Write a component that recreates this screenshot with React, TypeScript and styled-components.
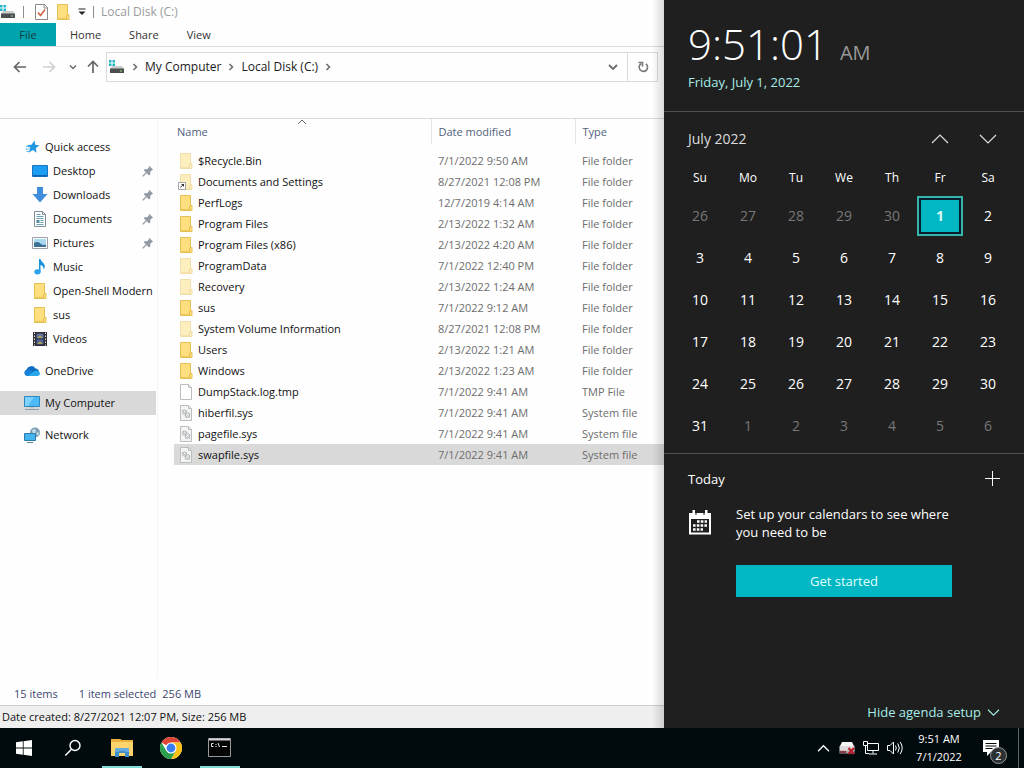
import React, { useState } from "react";
import styled, { createGlobalStyle, css } from "styled-components";

const teal = "#00b7c3";
const mint = "#a6ece6";

const GlobalStyle = createGlobalStyle`
  *, *::before, *::after { box-sizing: border-box; }
  body {
    margin: 0;
    font-family: "Open Sans", "Noto Sans", sans-serif;
    font-size: 12px;
    line-height: 16px;
    color: #1a1a1a;
    background: #fff;
  }
  button { font: inherit; color: inherit; border: 0; padding: 0; margin: 0; background: none; cursor: default; }
  a { color: inherit; text-decoration: none; cursor: default; }
  svg { display: block; flex: none; }
`;

const Desktop = styled.div`
  display: flex;
  flex-direction: column;
  min-height: 100vh;
`;

const Workspace = styled.div`
  flex: 1;
  display: flex;
  min-height: 0;
`;

/* ---------- explorer ---------- */

const Explorer = styled.main`
  position: relative;
  flex: 1;
  min-width: 0;
  display: flex;
  flex-direction: column;
  background: #fefefe;
  overflow: hidden;
  &::after {
    content: "";
    position: absolute;
    inset: 0 0 0 auto;
    width: 12px;
    background: linear-gradient(to right, rgba(0, 0, 0, 0), rgba(0, 0, 0, 0.14));
    pointer-events: none;
  }
`;

const TitleBar = styled.header`
  display: flex;
  align-items: center;
  height: 23px;
  gap: 7px;
`;

const Divider = styled.span`
  width: 1px;
  height: 12px;
  background: #8d8d8d;
`;

const QuickTools = styled.div`
  display: flex;
  align-items: center;
  gap: 7px;
  padding-left: 4px;
`;

const WindowTitle = styled.h1`
  margin: 0;
  font-size: 12px;
  font-weight: 400;
  line-height: 16px;
  color: #9b9b9b;
`;

const RibbonTabs = styled.nav`
  display: flex;
  height: 24px;
  border-bottom: 1px solid #dcdcdc;
  font-size: 11px;
`;

const RibbonTab = styled.button<{ $primary?: boolean }>`
  padding: 0 14px;
  color: #333;
  ${(p) =>
    p.$primary &&
    css`
      width: 56px;
      background: #00a4ae;
      color: #123c40;
    `}
`;

const AddressRow = styled.div`
  display: flex;
  align-items: center;
  height: 40px;
  padding-right: 6px;
`;

const NavButton = styled.button<{ $narrow?: boolean }>`
  display: flex;
  align-items: center;
  justify-content: center;
  width: ${(p) => (p.$narrow ? 20 : 29)}px;
  height: 24px;
`;

const NavButtons = styled.div`
  display: flex;
  padding-left: 5px;
  width: 106px;
`;

const AddressBox = styled.div`
  flex: 1;
  display: flex;
  align-items: center;
  height: 30px;
  border: 1px solid #dadada;
  padding-left: 2px;
`;

const Crumbs = styled.ol`
  flex: 1;
  display: flex;
  align-items: center;
  list-style: none;
  margin: 0;
  padding: 0;
`;

const Crumb = styled.li`
  display: flex;
  align-items: center;
`;

const CrumbArrow = styled.span`
  display: flex;
  justify-content: center;
  width: 20px;
`;

const RefreshButton = styled(NavButton)`
  height: 28px;
  width: 30px;
  border-left: 1px solid #dadada;
`;

const Panes = styled.div`
  flex: 1;
  display: flex;
  margin-top: 31px;
  border-top: 1px solid #dadada;
`;

const TreePane = styled.nav`
  flex: none;
  width: 158px;
  padding: 16px 1px 0 0;
  border-right: 1px solid #f6f6f6;
  font-size: 11px;
`;

const TreeGroup = styled.ul`
  list-style: none;
  margin: 0 0 8px;
  padding: 0;
`;

const TreeLink = styled.a<{ $child?: boolean; $current?: boolean }>`
  display: flex;
  align-items: center;
  gap: 5px;
  height: 24px;
  padding-left: ${(p) => (p.$child ? 32 : 24)}px;
  padding-right: 2px;
  white-space: nowrap;
  color: #111;
  background: ${(p) => (p.$current ? "#d9d9d9" : "transparent")};
`;

const TreeText = styled.span`
  flex: 1;
`;

const ListPane = styled.section`
  flex: 1;
  min-width: 0;
  padding-left: 16px;
`;

const FileTable = styled.table`
  width: 100%;
  table-layout: fixed;
  border-collapse: collapse;
  font-size: 11px;
  tbody::before {
    content: "";
    display: block;
    height: 6px;
  }
`;

const HeadCell = styled.th<{ $width?: number }>`
  position: relative;
  width: ${(p) => (p.$width ? p.$width + "px" : "auto")};
  height: 25px;
  padding: 0 0 0 7px;
  text-align: left;
  font-weight: 400;
  color: #51627c;
  border-left: 1px solid #e6e6e6;
  &:first-child {
    padding-left: 3px;
    border-left: 0;
  }
`;

const SortMark = styled.span`
  position: absolute;
  top: -2px;
  left: 50%;
  margin-left: -5px;
`;

const FileRow = styled.tr<{ $selected?: boolean }>`
  height: 21px;
  background: ${(p) => (p.$selected ? "#d9d9d9" : "transparent")};
`;

const FileCell = styled.td`
  padding: 0 0 0 7px;
  white-space: nowrap;
  color: #6d6d6d;
  &:first-child {
    padding-left: 4px;
  }
`;

const FileName = styled.span`
  display: flex;
  align-items: center;
  gap: 4px;
  color: #111;
`;

const StatusBar = styled.footer`
  display: flex;
  align-items: center;
  gap: 21px;
  height: 26px;
  padding: 3px 0 0 14px;
  font-size: 11px;
  color: #3c4870;
`;

const StatusGroup = styled.span`
  display: flex;
  gap: 6px;
`;

const DetailsBar = styled.div`
  display: flex;
  align-items: center;
  height: 23px;
  padding-left: 2px;
  border-top: 1px solid #cfcfcf;
  background: #efefef;
  font-size: 11px;
  color: #111;
`;

/* ---------- clock and calendar flyout ---------- */

const Flyout = styled.aside`
  flex: none;
  display: flex;
  flex-direction: column;
  width: 360px;
  background: #1f1f1f;
  color: #fff;
  font-size: 13px;
`;

const ClockPanel = styled.section`
  height: 112px;
  padding: 16px 24px 0;
  border-bottom: 1px solid #505050;
`;

const ClockTime = styled.div`
  display: flex;
  align-items: baseline;
  gap: 12px;
  height: 56px;
  font-size: 42px;
  font-weight: 300;
  line-height: 56px;
`;

const Meridiem = styled.span`
  font-size: 20px;
  font-weight: 400;
  color: #999;
`;

const DateLink = styled.a`
  display: block;
  line-height: 20px;
  color: ${mint};
`;

const CalendarPanel = styled.section`
  height: 342px;
  padding: 6px 12px 0;
  border-bottom: 1px solid #505050;
`;

const MonthRow = styled.div`
  display: flex;
  align-items: center;
  height: 42px;
  padding-left: 12px;
`;

const MonthTitle = styled.h2`
  flex: 1;
  margin: 0;
  font-size: 14px;
  font-weight: 400;
  color: #dcdcdc;
`;

const MonthButton = styled.button`
  display: flex;
  align-items: center;
  justify-content: center;
  width: 48px;
  height: 40px;
`;

const MonthTable = styled.table`
  width: 100%;
  table-layout: fixed;
  border-collapse: collapse;
  text-align: center;
`;

const WeekHead = styled.th`
  height: 35px;
  padding: 0;
  font-size: 12px;
  font-weight: 400;
`;

const DayCell = styled.td`
  height: 42px;
  padding: 0;
`;

const DayButton = styled.button<{ $muted?: boolean; $today?: boolean }>`
  width: 46px;
  height: 40px;
  font-size: 14px;
  color: ${(p) => (p.$muted ? "#777" : "#fff")};
  ${(p) =>
    p.$today &&
    css`
      border: 2px solid #35b5a9;
      background: ${teal};
      box-shadow: inset 0 0 0 2px #0b1c2b;
      font-weight: 700;
      color: #d5fbf8;
    `}
`;

const AgendaPanel = styled.section`
  flex: 1;
  display: flex;
  flex-direction: column;
  padding: 9px 24px 6px;
`;

const AgendaHead = styled.div`
  display: flex;
  align-items: center;
  justify-content: space-between;
  height: 32px;
`;

const AgendaTitle = styled.h2`
  margin: 0;
  font-size: 13px;
  font-weight: 400;
`;

const SetupCard = styled.div`
  display: flex;
  align-items: flex-start;
  gap: 24px;
  padding: 10px 48px 0 0;
`;

const SetupIcon = styled.span`
  padding-top: 5px;
`;

const SetupBody = styled.div`
  flex: 1;
`;

const SetupText = styled.p`
  margin: 0 0 24px;
  line-height: 18px;
`;

const PrimaryButton = styled.button`
  width: 100%;
  height: 32px;
  background: ${teal};
  color: #e2fffd;
`;

const HideButton = styled.button`
  display: flex;
  align-items: center;
  gap: 6px;
  height: 20px;
  margin-top: auto;
  align-self: flex-end;
  color: ${mint};
`;

/* ---------- taskbar ---------- */

const Taskbar = styled.footer`
  display: flex;
  justify-content: space-between;
  height: 40px;
  background: #010a0c;
  color: #fff;
`;

const TaskGroup = styled.div`
  display: flex;
  gap: 1px;
`;

const TaskButton = styled.button<{ $open?: boolean }>`
  display: flex;
  align-items: center;
  justify-content: center;
  width: 48px;
  height: 40px;
  background: ${(p) =>
    p.$open ? "linear-gradient(#7fdcd8, #7fdcd8) center bottom / 40px 2px no-repeat" : "none"};
`;

const Tray = styled.div`
  display: flex;
`;

const TrayButton = styled(TaskButton)`
  width: 24px;
`;

const TrayClock = styled.button`
  width: 64px;
  font-size: 11px;
  line-height: 18px;
`;

const NoticeButton = styled(TaskButton)`
  width: 47px;
  padding-right: 8px;
  position: relative;
`;

const NoticeBadge = styled.span`
  position: absolute;
  right: 11px;
  bottom: 4px;
  width: 17px;
  height: 17px;
  border: 1px solid #999;
  border-radius: 50%;
  background: #2c3234;
  font-size: 11px;
  line-height: 15px;
`;

const ShowDesktop = styled.button`
  width: 6px;
  border-left: 1px solid #5c6466;
`;

/* ---------- drawings ---------- */

type Dir = "up" | "down" | "right" | "left";
const rotation: Record<Dir, number> = { down: 0, left: 90, up: 180, right: 270 };

const Chevron = ({ dir, w = 10, stroke = "#6b6b6b", sw = 1.5 }: { dir: Dir; w?: number; stroke?: string; sw?: number }) => {
  const h = w / 2;
  return (
    <svg width={w + 2} height={w + 2} viewBox={`${-h - 1} ${-h - 1} ${w + 2} ${w + 2}`} aria-hidden="true">
      <path d={`M${-h} ${-h / 2}L0 ${h / 2}L${h} ${-h / 2}`} transform={`rotate(${rotation[dir]})`} fill="none" stroke={stroke} strokeWidth={sw} />
    </svg>
  );
};

const Arrow = ({ dir, stroke }: { dir: Dir; stroke: string }) => (
  <svg width="14" height="14" viewBox="-7 -7 14 14" aria-hidden="true">
    <path d="M0 -6V5.5M-5 0.5L0 5.5L5 0.5" transform={`rotate(${rotation[dir]})`} fill="none" stroke={stroke} strokeWidth="1.7" />
  </svg>
);

const DriveIcon = () => (
  <svg width="16" height="16" viewBox="0 0 16 16" aria-hidden="true">
    <path d="M0 1h2.500v2.500H0zM3.500 1H6v2.500H3.500zM0 4.500h2.500V7H0zM3.500 4.500H6V7H3.500z" fill="#20b4c4" />
    <path d="M3 7h10l2 3H1z" fill="#c9cbcb" />
    <path d="M1 9.500h14V14H1z" fill="#4b4f50" />
    <path d="M11 11.500h2v1h-2z" fill="#9be08a" />
  </svg>
);

const CheckDocIcon = () => (
  <svg width="13" height="16" viewBox="0 0 13 16" aria-hidden="true">
    <path d="M.5.5h9l3 3v12H.5z" fill="#fff" stroke="#8b8b8b" />
    <path d="M9 .5V4h3.500" fill="none" stroke="#8b8b8b" />
    <path d="M3 8.500l2.500 3L10 5.500" fill="none" stroke="#d0603a" strokeWidth="1.500" />
  </svg>
);

const FolderIcon = ({ faded = false, link = false }: { faded?: boolean; link?: boolean }) => (
  <svg width="16" height="16" viewBox="0 0 16 16" aria-hidden="true">
    <g opacity={faded ? 0.5 : 1}>
      <path d="M2.500.5h10v10h1.500v5H2.500z" fill="#fddf80" stroke="#e6c055" />
      <path d="M11.500 15V11.500l1.500-1" fill="none" stroke="#e3b748" />
      <path d="M3 14.500h8.500" stroke="#f0c95c" />
    </g>
    {link && (
      <>
        <path d="M.5 8.500h7v7h-7z" fill="#fff" stroke="#a5a5a5" />
        <path d="M2.300 13.500L4.500 11.200" stroke="#333" />
        <path d="M3 10h3v3z" fill="#333" />
      </>
    )}
  </svg>
);

const BlankFileIcon = ({ gear = false }: { gear?: boolean }) => (
  <svg width="16" height="16" viewBox="0 0 16 16" aria-hidden="true">
    <path d="M2.500.5h8l3 3v12h-11z" fill={gear ? "#f3f4f4" : "#fff"} stroke="#bdbdbd" />
    <path d="M10.500.5v3h3" fill="none" stroke="#bdbdbd" />
    {gear && (
      <g fill="none" stroke="#b0b4b7">
        <circle cx="6.500" cy="7" r="2" />
        <circle cx="9.500" cy="10" r="2.300" />
        <path d="M4 5l8 8M4.500 9L9 5.500M7 13l5-4.500" strokeWidth=".6" />
      </g>
    )}
  </svg>
);

const StarIcon = () => (
  <svg width="16" height="16" viewBox="0 0 16 16" aria-hidden="true">
    <path d="M10.500 1.500l.8 4.300 4.200.7-3.600 2.500.6 4.700-3.600-2.700-4.200 2.700 1.500-4.800L3.300 6l4.200-.2z" fill="#2398e0" />
    <path d="M2 7.500h3.500M1.500 10h4M2.500 12.500h3" stroke="#5db7ec" />
  </svg>
);

const PinIcon = () => (
  <svg width="12" height="12" viewBox="0 0 12 12" aria-hidden="true">
    <path d="M7.200.8l4 4-1.400.5-1.600 1.800.2 2.200L7 10.500 1.800 5.300 3 4.100l2.200.1L7 2.300z" fill="#929ba3" />
    <path d="M4.500 7.500L.7 11.300" stroke="#929ba3" strokeWidth="1.200" />
  </svg>
);

const DesktopIcon = () => (
  <svg width="16" height="16" viewBox="0 0 16 16" aria-hidden="true">
    <path d="M.5 2.500h15v11H.5z" fill="#1b9df3" stroke="#1677bd" />
    <path d="M1 12h14v1.500H1z" fill="#0c66ad" />
  </svg>
);

const DownloadIcon = () => (
  <svg width="16" height="16" viewBox="0 0 16 16" aria-hidden="true">
    <path d="M5 0h6v7h4.500L8 15.500.5 7H5z" fill="#3f8edb" />
  </svg>
);

const DocumentIcon = () => (
  <svg width="16" height="16" viewBox="0 0 16 16" aria-hidden="true">
    <path d="M2.500.5h8l3 3v12h-11z" fill="#fff" stroke="#7f8d96" />
    <path d="M10.500.5v3h3" fill="none" stroke="#7f8d96" />
    <path d="M4.500 3.500h4M4.500 5.500h7M4.500 7.500h7M8.500 9.500h3M8.500 11.500h3M4.500 13.500h7" stroke="#6fa0b5" />
    <path d="M4.500 9h3v3h-3z" fill="#4d8a9e" />
  </svg>
);

const PictureIcon = () => (
  <svg width="16" height="16" viewBox="0 0 16 16" aria-hidden="true">
    <path d="M.5 2.500h15v11H.5z" fill="#fff" stroke="#98a1a8" />
    <path d="M2 4h12v8H2z" fill="#a9d8f2" />
    <path d="M2 8c3-2 5-1 7 1s4 0 5 1v2H2z" fill="#3b6f94" />
  </svg>
);

const MusicIcon = () => (
  <svg width="16" height="16" viewBox="0 0 16 16" aria-hidden="true">
    <path d="M7 0h1.500c.5 3 4.500 4 4.300 7.500-.1 1.500-.8 2.500-1.300 3 .3-2.500-.8-4-3-4.500v6.500H7z" fill="#1a8fdc" />
    <ellipse cx="5.500" cy="12.800" rx="3.200" ry="2.600" fill="#2aa3ec" />
  </svg>
);

const VideoIcon = () => (
  <svg width="16" height="16" viewBox="0 0 16 16" aria-hidden="true">
    <path d="M1 1h14v14H1z" fill="#2d2d33" />
    <path d="M2.500 1.500v13M13.500 1.500v13" stroke="#e8e8e8" strokeDasharray="1.500 1.500" />
    <path d="M4.500 2.500h7v5h-7z" fill="#5a6ea8" />
    <path d="M4.500 8.500h7v5h-7z" fill="#4c5fa0" />
    <path d="M5 7l3-3 3 3zM5 13l3-3 3 3z" fill="#a8a04e" />
  </svg>
);

const CloudIcon = () => (
  <svg width="16" height="16" viewBox="0 0 16 16" aria-hidden="true">
    <path d="M3.500 13A3.500 3.500 0 0 1 2.500 6.500 5 5 0 0 1 11.500 5.500 4 4 0 0 1 13 13z" fill="#0f6cbf" />
    <path d="M3 13c-3.500-1-3.500-5 0-6 2-.6 3.500 0 5 1.500L13 13z" fill="#1482d8" />
    <path d="M4 13l5-4c2-2 6.500-1.500 7 1.500.1 1.500-1 2.500-2.500 2.500z" fill="#29a7ec" />
  </svg>
);

const ComputerIcon = () => (
  <svg width="16" height="16" viewBox="0 0 16 16" aria-hidden="true">
    <path d="M.5 1.500h15v10H.5z" fill="#4bbaf5" stroke="#2f86bd" />
    <path d="M1 2h9L4 11H1z" fill="#7fd2fb" />
    <path d="M1 14.500h14" stroke="#8ba2af" />
    <path d="M6 12h4v1.500H6z" fill="#bac6cc" />
  </svg>
);

const NetworkIcon = () => (
  <svg width="16" height="16" viewBox="0 0 16 16" aria-hidden="true">
    <circle cx="11" cy="5.500" r="5" fill="#7f9fb5" />
    <path d="M8 3l3-1 1 3-3 3zM12 6l3-1-1 4z" fill="#c5dce9" />
    <path d="M.5 6.500h11v7H.5z" fill="#45b4ee" stroke="#2b7bab" />
    <path d="M3 15.500h6" stroke="#6f8796" />
  </svg>
);

const RefreshIcon = () => (
  <svg width="12" height="12" viewBox="0 0 12 12" aria-hidden="true">
    <path d="M8.800 2.800A4.200 4.200 0 1 1 4.200 2.600" fill="none" stroke="#777" strokeWidth="1.600" />
    <path d="M1.500 1.500h4v4" fill="none" stroke="#777" strokeWidth="1.600" />
  </svg>
);

const MenuMark = () => (
  <svg width="8" height="8" viewBox="0 0 8 8" aria-hidden="true">
    <path d="M.5 1h7" stroke="#222" />
    <path d="M.5 3.500h7L4 7z" fill="#222" />
  </svg>
);

const PlusIcon = () => (
  <svg width="16" height="16" viewBox="0 0 16 16" aria-hidden="true">
    <path d="M8.500 0v15M1 7.500h15" stroke="#fff" />
  </svg>
);

const CalendarIcon = () => (
  <svg width="24" height="26" viewBox="0 0 24 26" aria-hidden="true">
    <path d="M1 3h22v21.500H1z M3 9v13.500h18V9z" fill="#fff" fillRule="evenodd" />
    <path d="M4.500 0h2.500v5H4.500zM17 0h2.500v5H17z" fill="#fff" />
    <path d="M8 2.500v2.500M16 2.500v2.500" stroke="#1f1f1f" />
    <path d="M9 11.500h10M5 15.500h14M5 19.500h10" stroke="#fff" strokeWidth="2.600" strokeDasharray="2.600 1.200" />
  </svg>
);

const WindowsIcon = () => (
  <svg width="16" height="16" viewBox="0 0 16 16" aria-hidden="true">
    <path d="M0 2.300L6.800 1.300V7.600H0zM7.600 1.200L16 0v7.600H7.600zM0 8.400h6.800v6.300L0 13.700zM7.600 8.400H16V16l-8.400-1.200z" fill="#fff" />
  </svg>
);

const SearchIcon = () => (
  <svg width="18" height="18" viewBox="0 0 18 18" aria-hidden="true">
    <circle cx="11" cy="6.500" r="5" fill="none" stroke="#fff" strokeWidth="1.400" />
    <path d="M7.500 10.300L1.300 16.500" stroke="#fff" strokeWidth="1.500" />
  </svg>
);

const ExplorerIcon = () => (
  <svg width="22" height="20" viewBox="0 0 22 20" aria-hidden="true">
    <path d="M0 1h9l2 1h11v16H0z" fill="#e9b23d" />
    <path d="M0 4h22v14H0z" fill="#fbd56b" />
    <path d="M4 19v-7a2 2 0 0 1 2-2h10a2 2 0 0 1 2 2v7h-4v-4H8v4z" fill="#3f8fcb" />
    <path d="M4 14h4v-1h6v1h4v-2a2 2 0 0 0-2-2H6a2 2 0 0 0-2 2z" fill="#65abe0" />
  </svg>
);

const ChromeIcon = () => (
  <svg width="22" height="22" viewBox="0 0 24 24" aria-hidden="true">
    <circle cx="12" cy="12" r="12" fill="#fff" />
    <path d="M12 12L1.600 6A12 12 0 0 1 22.400 6H12z" fill="#dd4536" />
    <path d="M12 6h10.400A12 12 0 0 1 12 24l5.200-9z" fill="#fbc116" />
    <path d="M1.600 6A12 12 0 0 0 12 24l5.200-9L12 17.500 6.800 15z" fill="#2b9f4b" />
    <circle cx="12" cy="12" r="6" fill="#fff" />
    <circle cx="12" cy="12" r="4.800" fill="#3a7df0" />
  </svg>
);

const ConsoleIcon = () => (
  <svg width="24" height="20" viewBox="0 0 24 20" aria-hidden="true">
    <path d="M.5.5h22v18H.5z" fill="#050505" stroke="#9b9b9b" />
    <path d="M1 1.500h21" stroke="#d5d5d5" strokeWidth="2" />
    <path d="M5.500 5.500H3.500v3h2M8 6v1M8 8v1M10 5l1.500 4M14 8.500h5" fill="none" stroke="#e6e6e6" />
  </svg>
);

const TrayDriveIcon = () => (
  <svg width="18" height="16" viewBox="0 0 18 16" aria-hidden="true">
    <path d="M4 2h10l2 4H2z" fill="#f6f3f3" />
    <path d="M1.500 6h15v5h-15z" fill="#dcd8d8" />
    <path d="M1.500 10.500h15v3h-15z" fill="#a9a4a4" />
    <path d="M2 11h6v2H2z" fill="#8a3a40" />
    <path d="M10.500 8l5.500 6M16 8l-5.500 6" stroke="#b81a2c" strokeWidth="2.200" />
  </svg>
);

const TrayNetworkIcon = () => (
  <svg width="18" height="16" viewBox="0 0 18 16" aria-hidden="true">
    <path d="M5.500 3.500h11v7h-11zM11 10.500v3M7 14h8M1.500 1.500h4v4h-4zM3.500 5.500v8H7" fill="none" stroke="#fff" />
    <path d="M2 2h3v3H2z" fill="#010a0c" />
  </svg>
);

const SpeakerIcon = () => (
  <svg width="18" height="16" viewBox="0 0 18 16" aria-hidden="true">
    <path d="M1.500 5.500h2.500L7.500 2v12L4 10.500H1.500z" fill="none" stroke="#fff" />
    <path d="M9.500 5.500q1.500 2.500 0 5M11.800 3.500q3 4.500 0 9M14.200 2q4 6 0 12" fill="none" stroke="#fff" />
  </svg>
);

const NoticeIcon = () => (
  <svg width="18" height="18" viewBox="0 0 18 18" aria-hidden="true">
    <path d="M1 1h16v12H9l-4 4v-4H1z" fill="#fff" />
    <path d="M3.500 4.500h11M3.500 7h11M3.500 9.500h7" stroke="#010a0c" />
  </svg>
);

/* ---------- data ---------- */

interface TreeItem {
  label: string;
  icon: React.ReactNode;
  child?: boolean;
  pinned?: boolean;
}

const tree: TreeItem[][] = [
  [
    { label: "Quick access", icon: <StarIcon /> },
    { label: "Desktop", icon: <DesktopIcon />, child: true, pinned: true },
    { label: "Downloads", icon: <DownloadIcon />, child: true, pinned: true },
    { label: "Documents", icon: <DocumentIcon />, child: true, pinned: true },
    { label: "Pictures", icon: <PictureIcon />, child: true, pinned: true },
    { label: "Music", icon: <MusicIcon />, child: true },
    { label: "Open-Shell Modern", icon: <FolderIcon />, child: true },
    { label: "sus", icon: <FolderIcon />, child: true },
    { label: "Videos", icon: <VideoIcon />, child: true },
  ],
  [{ label: "OneDrive", icon: <CloudIcon /> }],
  [{ label: "My Computer", icon: <ComputerIcon /> }],
  [{ label: "Network", icon: <NetworkIcon /> }],
];

type Kind = "folder" | "hidden" | "link" | "file" | "system";

const files: [string, string, string, Kind][] = [
  ["$Recycle.Bin", "7/1/2022 9:50 AM", "File folder", "hidden"],
  ["Documents and Settings", "8/27/2021 12:08 PM", "File folder", "link"],
  ["PerfLogs", "12/7/2019 4:14 AM", "File folder", "folder"],
  ["Program Files", "2/13/2022 1:32 AM", "File folder", "folder"],
  ["Program Files (x86)", "2/13/2022 4:20 AM", "File folder", "folder"],
  ["ProgramData", "7/1/2022 12:40 PM", "File folder", "hidden"],
  ["Recovery", "2/13/2022 1:24 AM", "File folder", "hidden"],
  ["sus", "7/1/2022 9:12 AM", "File folder", "folder"],
  ["System Volume Information", "8/27/2021 12:08 PM", "File folder", "hidden"],
  ["Users", "2/13/2022 1:21 AM", "File folder", "folder"],
  ["Windows", "2/13/2022 1:23 AM", "File folder", "folder"],
  ["DumpStack.log.tmp", "7/1/2022 9:41 AM", "TMP File", "file"],
  ["hiberfil.sys", "7/1/2022 9:41 AM", "System file", "system"],
  ["pagefile.sys", "7/1/2022 9:41 AM", "System file", "system"],
  ["swapfile.sys", "7/1/2022 9:41 AM", "System file", "system"],
];

const fileIcons: Record<Kind, React.ReactNode> = {
  folder: <FolderIcon />,
  hidden: <FolderIcon faded />,
  link: <FolderIcon faded link />,
  file: <BlankFileIcon />,
  system: <BlankFileIcon gear />,
};

const weekdays = ["Su", "Mo", "Tu", "We", "Th", "Fr", "Sa"];

const weeks = Array.from({ length: 6 }, (_, w) =>
  weekdays.map((_, d) => {
    const date = new Date(2022, 5, 26 + w * 7 + d);
    return { day: date.getDate(), month: date.getMonth() };
  })
);

/* ---------- page ---------- */

const ExplorerWindow = () => {
  const [selected, setSelected] = useState("swapfile.sys");
  return (
    <Explorer>
      <TitleBar>
        <DriveIcon />
        <Divider />
        <QuickTools>
          <button aria-label="Properties"><CheckDocIcon /></button>
          <button aria-label="New folder"><FolderIcon /></button>
          <button aria-label="Customize toolbar"><MenuMark /></button>
        </QuickTools>
        <Divider />
        <WindowTitle>Local Disk (C:)</WindowTitle>
      </TitleBar>
      <RibbonTabs>
        <RibbonTab $primary>File</RibbonTab>
        <RibbonTab>Home</RibbonTab>
        <RibbonTab>Share</RibbonTab>
        <RibbonTab>View</RibbonTab>
      </RibbonTabs>
      <AddressRow>
        <NavButtons>
          <NavButton aria-label="Back"><Arrow dir="left" stroke="#666" /></NavButton>
          <NavButton aria-label="Forward"><Arrow dir="right" stroke="#d0d0d0" /></NavButton>
          <NavButton $narrow aria-label="Recent locations"><Chevron dir="down" w={6} /></NavButton>
          <NavButton $narrow aria-label="Up"><Arrow dir="up" stroke="#666" /></NavButton>
        </NavButtons>
        <AddressBox>
          <DriveIcon />
          <Crumbs>
            <Crumb>
              <CrumbArrow><Chevron dir="right" w={6} /></CrumbArrow>
              <a href="#computer">My Computer</a>
            </Crumb>
            <Crumb>
              <CrumbArrow><Chevron dir="right" w={6} /></CrumbArrow>
              <a href="#c">Local Disk (C:)</a>
              <CrumbArrow><Chevron dir="right" w={6} /></CrumbArrow>
            </Crumb>
          </Crumbs>
          <NavButton aria-label="Previous locations"><Chevron dir="down" w={8} sw={1.8} /></NavButton>
          <RefreshButton aria-label="Refresh"><RefreshIcon /></RefreshButton>
        </AddressBox>
      </AddressRow>
      <Panes>
        <TreePane>
          {tree.map((group) => (
            <TreeGroup key={group[0].label}>
              {group.map((item) => (
                <li key={item.label}>
                  <TreeLink href="#" $child={item.child} $current={item.label === "My Computer"}>
                    {item.icon}
                    <TreeText>{item.label}</TreeText>
                    {item.pinned && <PinIcon />}
                  </TreeLink>
                </li>
              ))}
            </TreeGroup>
          ))}
        </TreePane>
        <ListPane>
          <FileTable>
            <thead>
              <tr>
                <HeadCell $width={257}>
                  Name
                  <SortMark><Chevron dir="up" w={8} sw={1} /></SortMark>
                </HeadCell>
                <HeadCell $width={144}>Date modified</HeadCell>
                <HeadCell>Type</HeadCell>
              </tr>
            </thead>
            <tbody>
              {files.map(([name, date, type, kind]) => (
                <FileRow key={name} $selected={name === selected} onClick={() => setSelected(name)}>
                  <FileCell><FileName>{fileIcons[kind]}{name}</FileName></FileCell>
                  <FileCell>{date}</FileCell>
                  <FileCell>{type}</FileCell>
                </FileRow>
              ))}
            </tbody>
          </FileTable>
        </ListPane>
      </Panes>
      <StatusBar>
        <span>15 items</span>
        <StatusGroup><span>1 item selected</span><span>256 MB</span></StatusGroup>
      </StatusBar>
      <DetailsBar>Date created: 8/27/2021 12:07 PM, Size: 256 MB</DetailsBar>
    </Explorer>
  );
};

const ClockFlyout = () => (
  <Flyout>
    <ClockPanel>
      <ClockTime>9:51:01<Meridiem>AM</Meridiem></ClockTime>
      <DateLink href="#today">Friday, July 1, 2022</DateLink>
    </ClockPanel>
    <CalendarPanel>
      <MonthRow>
        <MonthTitle>July 2022</MonthTitle>
        <MonthButton aria-label="Previous month"><Chevron dir="up" w={16} stroke="#ddd" sw={1.2} /></MonthButton>
        <MonthButton aria-label="Next month"><Chevron dir="down" w={16} stroke="#ddd" sw={1.2} /></MonthButton>
      </MonthRow>
      <MonthTable>
        <thead>
          <tr>{weekdays.map((d) => <WeekHead key={d} scope="col">{d}</WeekHead>)}</tr>
        </thead>
        <tbody>
          {weeks.map((week, w) => (
            <tr key={w}>
              {week.map(({ day, month }) => (
                <DayCell key={day}>
                  <DayButton $muted={month !== 6} $today={month === 6 && day === 1}>{day}</DayButton>
                </DayCell>
              ))}
            </tr>
          ))}
        </tbody>
      </MonthTable>
    </CalendarPanel>
    <AgendaPanel>
      <AgendaHead>
        <AgendaTitle>Today</AgendaTitle>
        <button aria-label="New event"><PlusIcon /></button>
      </AgendaHead>
      <SetupCard>
        <SetupIcon><CalendarIcon /></SetupIcon>
        <SetupBody>
          <SetupText>Set up your calendars to see where you need to be</SetupText>
          <PrimaryButton>Get started</PrimaryButton>
        </SetupBody>
      </SetupCard>
      <HideButton>Hide agenda setup<Chevron dir="down" w={11} stroke={mint} sw={1.1} /></HideButton>
    </AgendaPanel>
  </Flyout>
);

const App = () => (
  <>
    <GlobalStyle />
    <Desktop>
      <Workspace>
        <ExplorerWindow />
        <ClockFlyout />
      </Workspace>
      <Taskbar>
        <TaskGroup>
          <TaskButton aria-label="Start"><WindowsIcon /></TaskButton>
          <TaskButton aria-label="Search"><SearchIcon /></TaskButton>
          <TaskButton $open aria-label="File Explorer"><ExplorerIcon /></TaskButton>
          <TaskButton aria-label="Chrome"><ChromeIcon /></TaskButton>
          <TaskButton $open aria-label="Command Prompt"><ConsoleIcon /></TaskButton>
        </TaskGroup>
        <Tray>
          <TrayButton aria-label="Show hidden icons"><Chevron dir="up" w={11} stroke="#fff" sw={1.3} /></TrayButton>
          <TrayButton aria-label="Drive"><TrayDriveIcon /></TrayButton>
          <TrayButton aria-label="Network"><TrayNetworkIcon /></TrayButton>
          <TrayButton aria-label="Volume"><SpeakerIcon /></TrayButton>
          <TrayClock>9:51 AM<br />7/1/2022</TrayClock>
          <NoticeButton aria-label="Notifications"><NoticeIcon /><NoticeBadge>2</NoticeBadge></NoticeButton>
          <ShowDesktop aria-label="Show desktop" />
        </Tray>
      </Taskbar>
    </Desktop>
  </>
);

export default App;
